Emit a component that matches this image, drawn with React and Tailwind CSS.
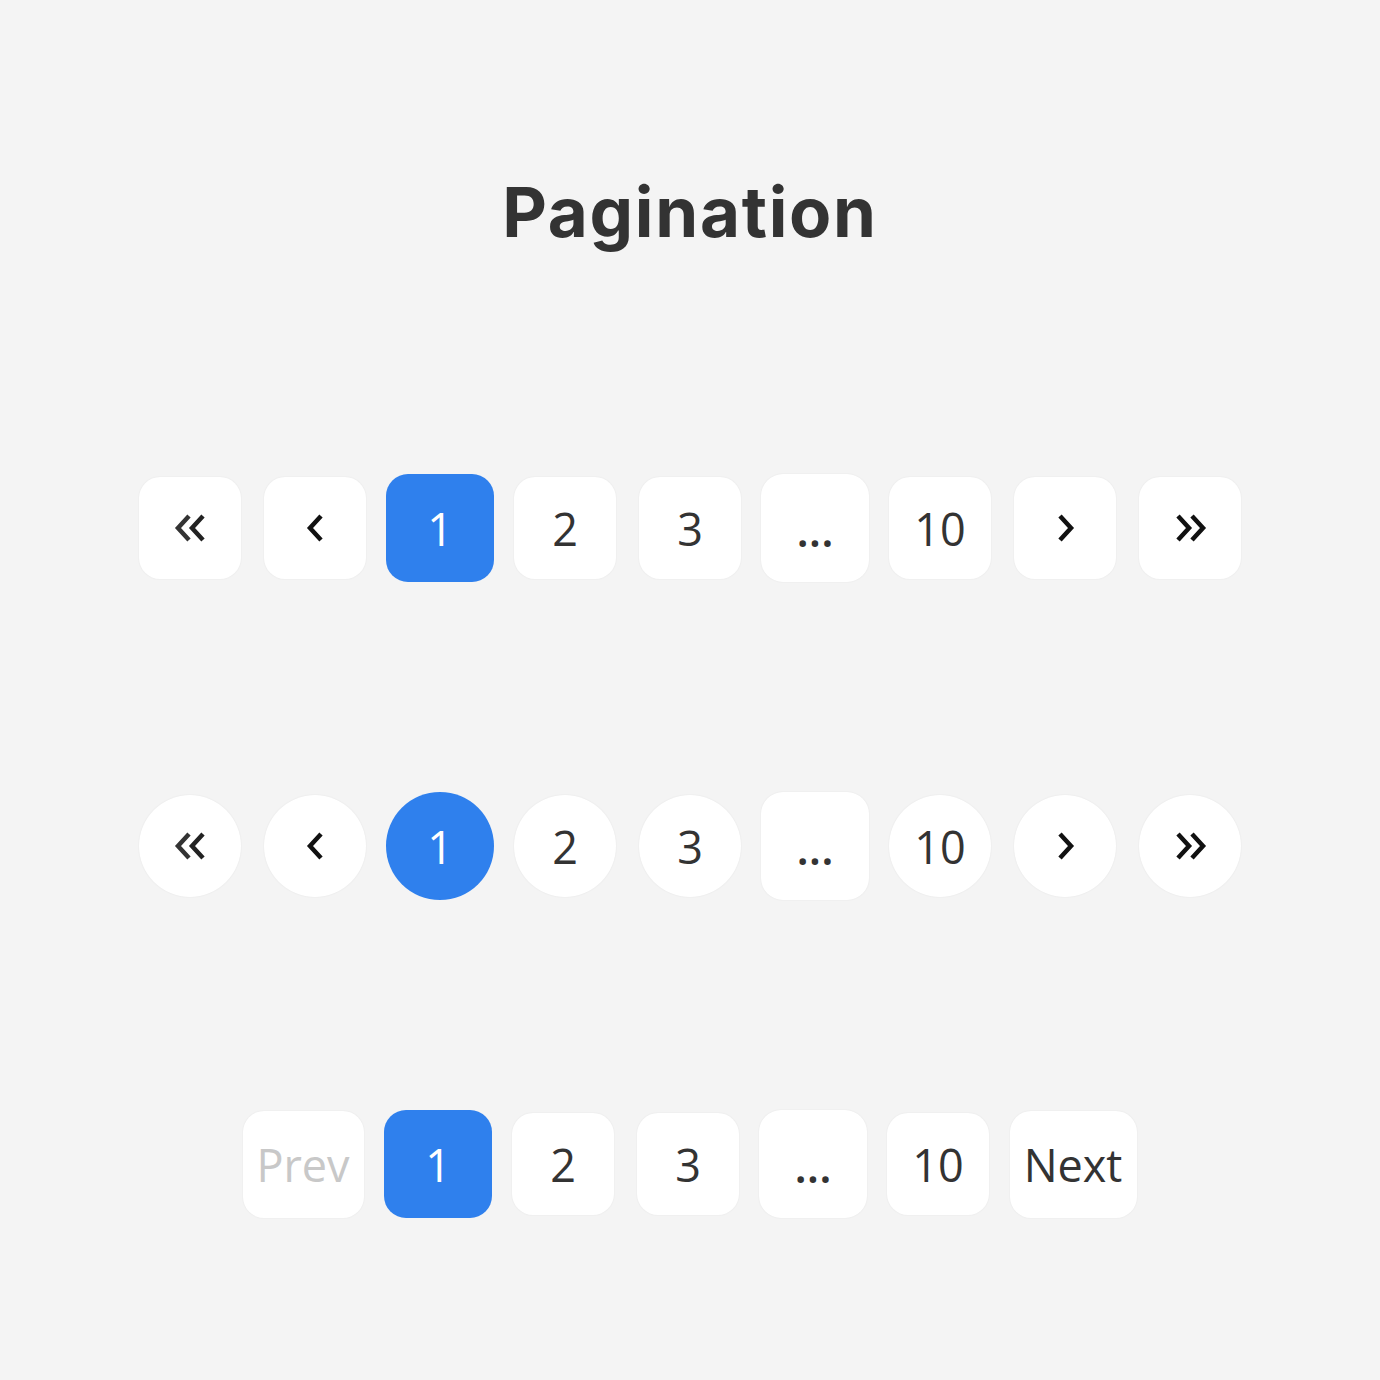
import React from "react";

const BLUE = "bg-[#2f80ed]";

function Chev({ dir = "left", double = false }) {
  const single = dir === "left" ? "15,2 4,14 15,26" : "4,2 15,14 4,26";
  if (!double) {
    return (
      <svg width="19" height="28" viewBox="0 0 19 28" fill="none">
        <polyline points={single} stroke="#111" strokeWidth="4.5" strokeLinejoin="miter" />
      </svg>
    );
  }
  const a = dir === "left" ? "15,2 4,14 15,26" : "4,2 15,14 4,26";
  const b = dir === "left" ? "29,2 18,14 29,26" : "18,2 29,14 18,26";
  return (
    <svg width="33" height="28" viewBox="0 0 33 28" fill="none">
      <polyline points={a} stroke={dir === "left" ? "#333" : "#111"} strokeWidth="4.5" strokeLinejoin="miter" />
      <polyline points={b} stroke={dir === "left" ? "#222" : "#111"} strokeWidth="4.5" strokeLinejoin="miter" />
    </svg>
  );
}

function Box({ children, round, active, big, wide, muted }) {
  const size = big ? "w-[108px] h-[108px]" : wide ? `${wide} h-[107px]` : "w-[102px] h-[102px]";
  const shape = round ? "rounded-full" : big ? "rounded-[22px]" : "rounded-[21px]";
  const color = active
    ? `${BLUE} text-white`
    : `bg-white ${muted ? "text-[#c8c8c8]" : "text-[#333333]"} shadow-[0_0_2px_rgba(0,0,0,0.07)]`;
  return (
    <div
      className={`${size} ${shape} ${color} flex items-center justify-center text-[45px] leading-none font-['Open_Sans',sans-serif]`}
    >
      {children}
    </div>
  );
}

function Cell({ children, w = "w-[125px]" }) {
  return <div className={`${w} flex items-center justify-center`}>{children}</div>;
}

function Dots() {
  return <span className="relative top-[1px] font-semibold">...</span>;
}

function IconRow({ round }) {
  return (
    <div className="flex items-center h-[108px]">
      <Cell><Box round={round}><Chev dir="left" double /></Box></Cell>
      <Cell><Box round={round}><Chev dir="left" /></Box></Cell>
      <Cell><Box round={round} active big>1</Box></Cell>
      <Cell><Box round={round}>2</Box></Cell>
      <Cell><Box round={round}>3</Box></Cell>
      <Cell><Box big><Dots /></Box></Cell>
      <Cell><Box round={round}>10</Box></Cell>
      <Cell><Box round={round}><Chev dir="right" /></Box></Cell>
      <Cell><Box round={round}><Chev dir="right" double /></Box></Cell>
    </div>
  );
}

export default function App() {
  return (
    <div className="h-[1380px] w-full bg-[#f4f4f4] flex flex-col items-center overflow-hidden">
      <h1 className="mt-[178px] text-[69px] leading-none font-bold text-[#333333] font-['Inter',sans-serif] tracking-[1.7px]">
        Pagination
      </h1>
      <div className="mt-[227px]">
        <IconRow />
      </div>
      <div className="mt-[210px]">
        <IconRow round />
      </div>
      <div className="mt-[210px] pr-[4px] flex items-center h-[108px]">
        <Cell w="w-[145px]"><Box wide="w-[121px]" muted>Prev</Box></Cell>
        <Cell><Box active big>1</Box></Cell>
        <Cell><Box>2</Box></Cell>
        <Cell><Box>3</Box></Cell>
        <Cell><Box big><Dots /></Box></Cell>
        <Cell><Box>10</Box></Cell>
        <Cell w="w-[145px]"><Box wide="w-[127px]">Next</Box></Cell>
      </div>
    </div>
  );
}
